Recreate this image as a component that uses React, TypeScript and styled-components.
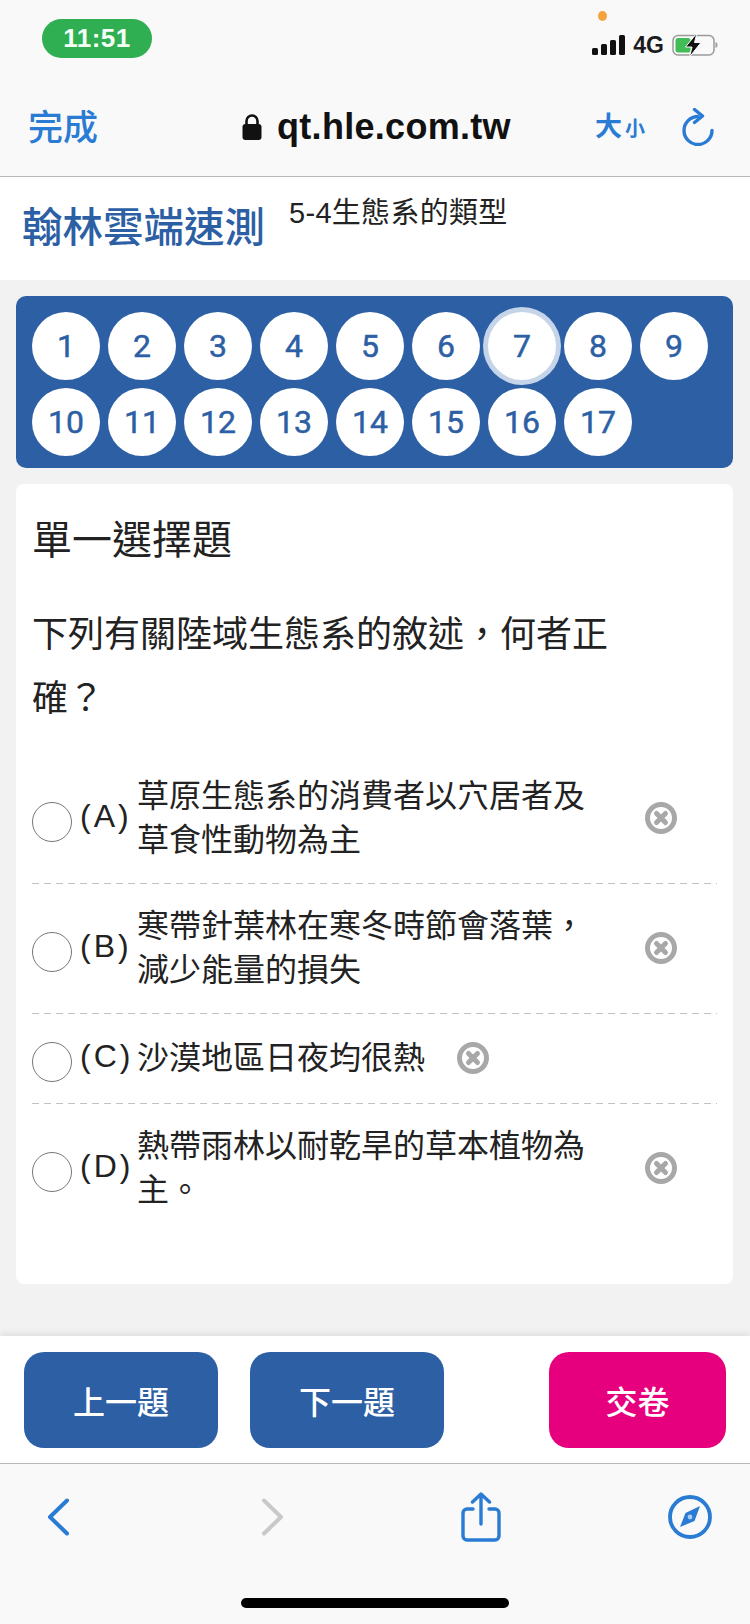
import React from "react";
import styled, { createGlobalStyle } from "styled-components";

const CJK = `"Noto Sans CJK TC", "Noto Sans CJK SC", sans-serif`;
const LATIN = `"Liberation Sans", Arial, ${CJK}`;
const BLUE = "#2d5fa5";
const LINK = "#2a7bd4";

const GlobalStyle = createGlobalStyle`
  html, body { margin: 0; padding: 0; background: #f2f2f2; }
  body { font-family: ${LATIN}; color: #222; }
  * { box-sizing: border-box; }
`;

const Page = styled.div`
  width: 750px;
  height: 1624px;
  display: flex;
  flex-direction: column;
  overflow: hidden;
`;

/* phone + browser chrome */
const Chrome = styled.div`
  height: 177px;
  background: #f9f9f9;
  border-bottom: 1px solid #b9b9b9;
  display: flex;
  flex-direction: column;
`;

const StatusBar = styled.div`
  height: 96px;
  padding: 19px 32px 0 42px;
  display: flex;
  justify-content: space-between;
  align-items: flex-start;
`;

const TimePill = styled.div`
  width: 110px;
  height: 39px;
  border-radius: 20px;
  background: #30ae52;
  color: #f4fff6;
  font-size: 26px;
  font-weight: 700;
  letter-spacing: 0.5px;
  display: flex;
  align-items: center;
  justify-content: center;
`;

const StatusRight = styled.div`
  position: relative;
  height: 38px;
  margin-top: 7px;
  display: flex;
  align-items: center;
  gap: 8px;
`;

const OrangeDot = styled.span`
  position: absolute;
  top: -15px;
  left: 6px;
  width: 9px;
  height: 10px;
  border-radius: 50%;
  background: #f5a33c;
`;

const NetLabel = styled.span`
  font-size: 23px;
  font-weight: 700;
  color: #1c1c1e;
`;

const UrlBar = styled.div`
  display: grid;
  grid-template-columns: 214px 353px 87px auto;
  align-items: center;
  padding-left: 28px;
  height: 62px;
`;

const Done = styled.div`
  font-family: ${CJK};
  font-size: 35px;
  font-weight: 500;
  color: ${LINK};
  line-height: 1;
  margin-top: -6px;
`;

const Url = styled.div`
  display: flex;
  align-items: center;
  gap: 15px;
  font-size: 36px;
  font-weight: 700;
  color: #111;
  letter-spacing: 0.3px;
`;

const SizeToggle = styled.div`
  font-family: ${CJK};
  color: ${LINK};
  font-weight: 700;
  display: flex;
  align-items: baseline;
  gap: 3px;
  margin-top: -6px;
`;

const SizeChar = styled.span<{ $size: number }>`
  font-size: ${(p) => p.$size}px;
  line-height: 1;
`;

/* page header */
const Header = styled.header`
  height: 103px;
  background: #fff;
  display: flex;
  padding-left: 22px;
`;

const Logo = styled.div`
  font-family: ${CJK};
  font-size: 40.5px;
  font-weight: 500;
  color: ${BLUE};
  line-height: 48px;
  margin-top: 24px;
  width: 267px;
`;

const Lesson = styled.div`
  font-family: ${LATIN};
  font-size: 29px;
  letter-spacing: 0.3px;
  color: #222;
  line-height: 34px;
  margin-top: 19px;
`;

const Main = styled.main`
  flex: 1;
  padding: 16px 17px 0 16px;
  display: flex;
  flex-direction: column;
  gap: 16px;
`;

/* question number grid */
const NumberPanel = styled.nav`
  height: 172px;
  background: ${BLUE};
  border-radius: 10px;
  padding: 16px;
  display: grid;
  grid-template-columns: repeat(9, 68px);
  grid-auto-rows: 68px;
  gap: 8px;
`;

const NumberBtn = styled.div<{ $current?: boolean }>`
  border-radius: 50%;
  background: #fff;
  color: ${BLUE};
  font-family: Roboto, ${LATIN};
  font-size: 32px;
  font-weight: 400;
  -webkit-text-stroke: 0.5px ${BLUE};
  padding-bottom: 1px;
  display: flex;
  align-items: center;
  justify-content: center;
  box-shadow: ${(p) => (p.$current ? "0 0 0 5px #c6d4ea" : "none")};
`;

/* question card */
const Card = styled.section`
  height: 800px;
  background: #fff;
  border-radius: 8px;
  padding: 29px 16px 0;
`;

const Kind = styled.h2`
  margin: 0;
  font-family: ${CJK};
  font-size: 40px;
  font-weight: 400;
  line-height: 48px;
  color: #222;
`;

const Question = styled.p`
  margin: 38px 0 27px;
  width: 590px;
  font-family: ${CJK};
  font-size: 36px;
  line-height: 64px;
  color: #222;
`;

const Option = styled.div`
  min-height: 90px;
  padding: 21px 0;
  display: flex;
  align-items: center;
  background: repeating-linear-gradient(to right, #c2c2c2 0 7px, transparent 7px 12px) left bottom / 100% 1px no-repeat;
  &:last-child {
    background: none;
  }
`;

const Radio = styled.span`
  flex: none;
  width: 40px;
  height: 40px;
  border-radius: 50%;
  border: 1.5px solid #767676;
  margin-top: 6px;
`;

const OptionLetter = styled.span`
  flex: none;
  width: 65px;
  padding-left: 8px;
  font-size: 32px;
  letter-spacing: 3px;
  line-height: 44px;
  color: #222;
  margin-top: -6px;
  white-space: nowrap;
`;

const OptionText = styled.span`
  max-width: 476px;
  font-family: ${CJK};
  font-size: 32px;
  line-height: 44px;
  color: #222;
  margin: -4px 0 4px;
`;

const Dismiss = styled.span`
  flex: none;
  margin-left: 32px;
  margin-top: -2px;
  display: flex;
`;

/* footer buttons */
const ActionBar = styled.div`
  height: 127px;
  background: #fff;
  box-shadow: 0 -3px 6px rgba(0, 0, 0, 0.07);
  padding: 16px 24px 0;
  display: flex;
  align-items: flex-start;
  gap: 32px;
`;

const ActionBtn = styled.div<{ $color: string; $width: number; $push?: boolean }>`
  width: ${(p) => p.$width}px;
  height: 96px;
  margin-left: ${(p) => (p.$push ? "auto" : "0")};
  border-radius: 20px;
  background: ${(p) => p.$color};
  color: #fff;
  font-family: ${CJK};
  font-size: 32px;
  font-weight: 500;
  display: flex;
  align-items: center;
  justify-content: center;
`;

/* browser toolbar */
const Toolbar = styled.div`
  height: 161px;
  background: #f9f9f9;
  border-top: 1px solid #b9b9b9;
  display: flex;
  flex-direction: column;
`;

const ToolIcons = styled.div`
  height: 134px;
  padding: 28px 0 0 47px;
  display: grid;
  grid-template-columns: 214px 200px 207px auto;
  align-items: center;
  align-content: start;
`;

const HomeBar = styled.div`
  align-self: center;
  width: 268px;
  height: 10px;
  border-radius: 5px;
  background: #000;
`;

const numbers = Array.from({ length: 17 }, (_, i) => i + 1);

const options = [
  { key: "A", text: "草原生態系的消費者以穴居者及草食性動物為主" },
  { key: "B", text: "寒帶針葉林在寒冬時節會落葉，減少能量的損失" },
  { key: "C", text: "沙漠地區日夜均很熱" },
  { key: "D", text: "熱帶雨林以耐乾旱的草本植物為主。" },
];

const SignalIcon = () => (
  <svg width="33" height="20" viewBox="0 0 33 20">
    <rect x="0" y="13" width="6" height="7" rx="1.5" fill="#111" />
    <rect x="9" y="9" width="6" height="11" rx="1.5" fill="#111" />
    <rect x="18" y="5" width="6" height="15" rx="1.5" fill="#111" />
    <rect x="27" y="0" width="6" height="20" rx="1.5" fill="#111" />
  </svg>
);

const BatteryIcon = () => (
  <svg width="46" height="24" viewBox="0 0 46 24">
    <rect x="1" y="2.5" width="41" height="19.5" rx="5" fill="none" stroke="#9a9a9a" strokeWidth="1.5" />
    <rect x="3.5" y="5" width="15" height="14.5" rx="2.5" fill="#41bd58" />
    <path d="M43.5 9v6c1.4-.4 2-1.6 2-3s-.6-2.6-2-3z" fill="#9a9a9a" />
    <path d="M25 0 L13.5 14 H20 L17.5 24 L29 9.5 H22.5 Z" fill="#111" stroke="#f9f9f9" strokeWidth="1" />
  </svg>
);

const LockIcon = () => (
  <svg width="20" height="26" viewBox="0 0 20 26">
    <path d="M4.5 11V7a5.5 5.5 0 0 1 11 0v4" fill="none" stroke="#111" strokeWidth="2.6" />
    <rect x="0.5" y="10" width="19" height="16" rx="3" fill="#111" />
  </svg>
);

const RefreshIcon = () => (
  <svg width="32" height="38" viewBox="0 0 32 38" fill="none" stroke={LINK} strokeWidth="3.4" strokeLinecap="round" strokeLinejoin="round">
    <path d="M16 8.5 A14 14 0 1 0 30 22.5" />
    <path d="M12.5 1.5 L20.5 8 L12.5 14.5" />
  </svg>
);

const DismissIcon = () => (
  <svg width="32" height="32" viewBox="0 0 32 32">
    <circle cx="16" cy="16" r="13.5" fill="none" stroke="#a8a8a8" strokeWidth="5" />
    <path d="M11.5 11.5 L20.5 20.5 M20.5 11.5 L11.5 20.5" stroke="#a8a8a8" strokeWidth="5" strokeLinecap="round" />
  </svg>
);

const ChevronIcon = ({ left, color }: { left?: boolean; color: string }) => (
  <svg width="23" height="38" viewBox="0 0 23 38" fill="none" stroke={color} strokeWidth="4" strokeLinecap="round" strokeLinejoin="round">
    <path d={left ? "M20 2.5 L3 19 L20 35.5" : "M3 2.5 L20 19 L3 35.5"} />
  </svg>
);

const ShareIcon = () => (
  <svg width="40" height="50" viewBox="0 0 40 50" fill="none" stroke={LINK} strokeWidth="3.4" strokeLinecap="round" strokeLinejoin="round">
    <path d="M12 17H6a4 4 0 0 0-4 4v23a4 4 0 0 0 4 4h28a4 4 0 0 0 4-4V21a4 4 0 0 0-4-4h-6" />
    <path d="M20 32V2M11.5 10L20 2l8.5 8" />
  </svg>
);

const CompassIcon = () => (
  <svg width="44" height="44" viewBox="0 0 44 44">
    <circle cx="22" cy="22" r="20" fill="none" stroke={LINK} strokeWidth="3.8" />
    <path d="M32 11 L26.5 26 L12 32 L17.5 18 Z" fill={LINK} />
    <circle cx="22" cy="22" r="2.4" fill="#a9cdf2" />
  </svg>
);

export default function App() {
  return (
    <Page>
      <GlobalStyle />
      <Chrome>
        <StatusBar>
          <TimePill>11:51</TimePill>
          <StatusRight>
            <OrangeDot />
            <SignalIcon />
            <NetLabel>4G</NetLabel>
            <BatteryIcon />
          </StatusRight>
        </StatusBar>
        <UrlBar>
          <Done>完成</Done>
          <Url>
            <LockIcon />
            qt.hle.com.tw
          </Url>
          <SizeToggle>
            <SizeChar $size={27}>大</SizeChar>
            <SizeChar $size={20}>小</SizeChar>
          </SizeToggle>
          <RefreshIcon />
        </UrlBar>
      </Chrome>

      <Header>
        <Logo>翰林雲端速測</Logo>
        <Lesson>5-4生態系的類型</Lesson>
      </Header>

      <Main>
        <NumberPanel>
          {numbers.map((n) => (
            <NumberBtn key={n} $current={n === 7}>
              {n}
            </NumberBtn>
          ))}
        </NumberPanel>

        <Card>
          <Kind>單一選擇題</Kind>
          <Question>下列有關陸域生態系的敘述，何者正確？</Question>
          {options.map((o) => (
            <Option key={o.key}>
              <Radio />
              <OptionLetter>({o.key})</OptionLetter>
              <OptionText>{o.text}</OptionText>
              <Dismiss>
                <DismissIcon />
              </Dismiss>
            </Option>
          ))}
        </Card>
      </Main>

      <ActionBar>
        <ActionBtn $color={BLUE} $width={194}>上一題</ActionBtn>
        <ActionBtn $color={BLUE} $width={194}>下一題</ActionBtn>
        <ActionBtn $color="#e6007e" $width={177} $push>交卷</ActionBtn>
      </ActionBar>

      <Toolbar>
        <ToolIcons>
          <ChevronIcon left color={LINK} />
          <ChevronIcon color="#c9c9c9" />
          <ShareIcon />
          <CompassIcon />
        </ToolIcons>
        <HomeBar />
      </Toolbar>
    </Page>
  );
}
